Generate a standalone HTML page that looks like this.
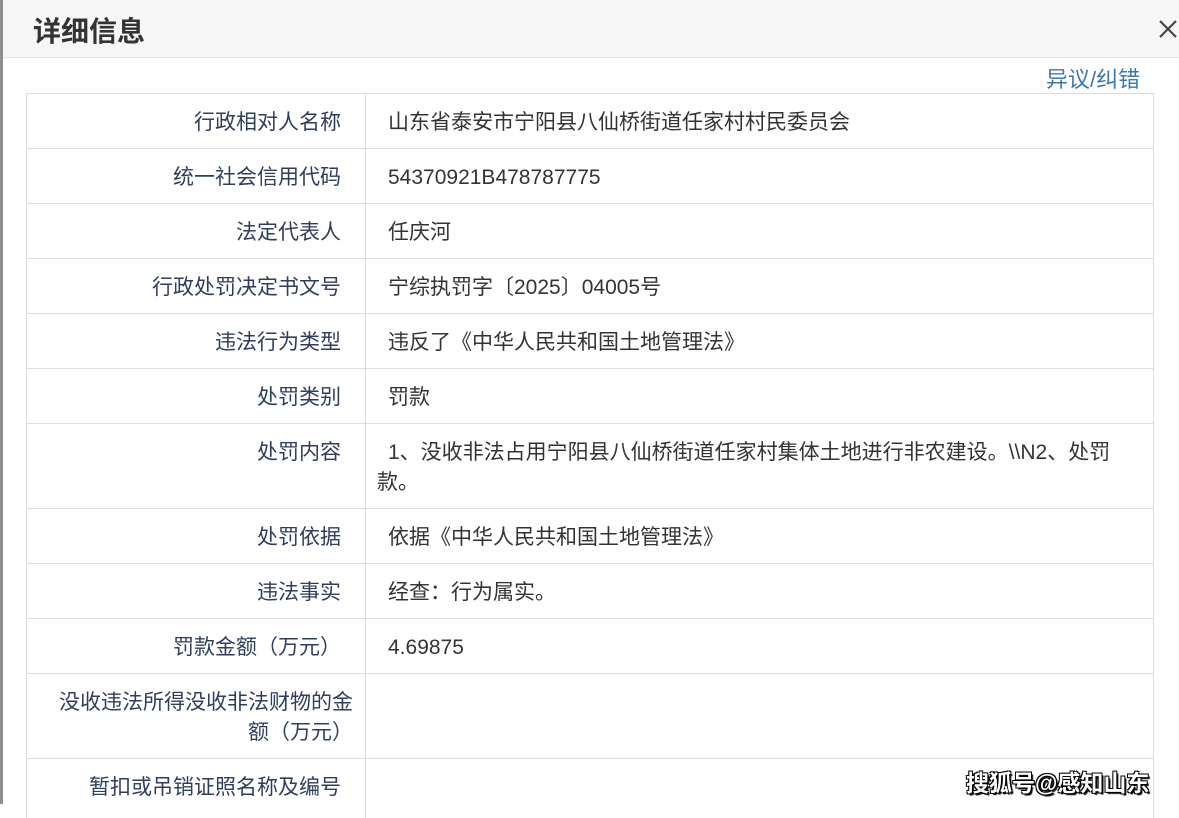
<!DOCTYPE html>
<html><head><meta charset="utf-8">
<style>
*{margin:0;padding:0;box-sizing:border-box}
html,body{width:1179px;height:804px;overflow:hidden;background:#fff;font-family:"Liberation Sans","Noto Sans CJK SC",sans-serif}
.lstrip{position:absolute;left:0;top:0;width:3px;height:804px;background:#8e8e8e}
.hdr{position:absolute;left:3px;top:0;width:1176px;height:58px;background:#f6f6f6;border-bottom:1px solid #e6e6e6}
.title{position:absolute;left:30px;top:10px;font-size:28px;font-weight:bold;color:#333}
.close{position:absolute;left:1154px;top:18px;width:22px;height:22px}
.link{position:absolute;left:1046px;top:62px;font-size:22px;color:#3b78ad}
.tbl{position:absolute;left:26px;top:93px;width:1128px;border-left:1px solid #ddd;border-right:1px solid #ddd}
.row{display:flex;border-top:1px solid #ddd}
.lab{width:339px;border-right:1px solid #ddd;text-align:right;padding:14px 24px 0 20px;font-size:21px;color:#2e3e5c;line-height:30px}
.val{flex:1;padding:14px 30px 0 22px;font-size:21px;color:#333;line-height:30px}
.wm{position:absolute;left:966px;top:764px;font-size:23px;font-weight:bold;color:#fff;text-shadow:1px 1px 0 #000,-1px -1px 0 #000,1px -1px 0 #000,-1px 1px 0 #000,2px 2px 1px #000}
</style></head><body>
<div class="lstrip"></div>
<div class="hdr"><div class="title">详细信息</div>
<svg class="close" viewBox="0 0 22 22"><path d="M3 3L19 19M19 3L3 19" stroke="#444" stroke-width="2.2"/></svg></div>
<div class="link">异议/纠错</div>
<div class="tbl">
<div class="row" style="height:55px"><div class="lab">行政相对人名称</div><div class="val">山东省泰安市宁阳县八仙桥街道任家村村民委员会</div></div>
<div class="row" style="height:55px"><div class="lab">统一社会信用代码</div><div class="val">54370921B478787775</div></div>
<div class="row" style="height:55px"><div class="lab">法定代表人</div><div class="val">任庆河</div></div>
<div class="row" style="height:55px"><div class="lab">行政处罚决定书文号</div><div class="val">宁综执罚字〔2025〕04005号</div></div>
<div class="row" style="height:55px"><div class="lab">违法行为类型</div><div class="val">违反了《中华人民共和国土地管理法》</div></div>
<div class="row" style="height:55px"><div class="lab">处罚类别</div><div class="val">罚款</div></div>
<div class="row" style="height:85px"><div class="lab">处罚内容</div><div class="val" style="padding-left:11px;padding-right:40px;text-indent:11px">1、没收非法占用宁阳县八仙桥街道任家村集体土地进行非农建设。\\N2、处罚<br>款。</div></div>
<div class="row" style="height:55px"><div class="lab">处罚依据</div><div class="val">依据《中华人民共和国土地管理法》</div></div>
<div class="row" style="height:55px"><div class="lab">违法事实</div><div class="val">经查：行为属实。</div></div>
<div class="row" style="height:55px"><div class="lab">罚款金额（万元）</div><div class="val">4.69875</div></div>
<div class="row" style="height:85px"><div class="lab" style="padding-left:10px;padding-right:12px">没收违法所得没收非法财物的金<br>额（万元）</div><div class="val"></div></div>
<div class="row" style="height:60px"><div class="lab">暂扣或吊销证照名称及编号</div><div class="val"></div></div>
</div>
<div class="wm">搜狐号@感知山东</div>
</body></html>
